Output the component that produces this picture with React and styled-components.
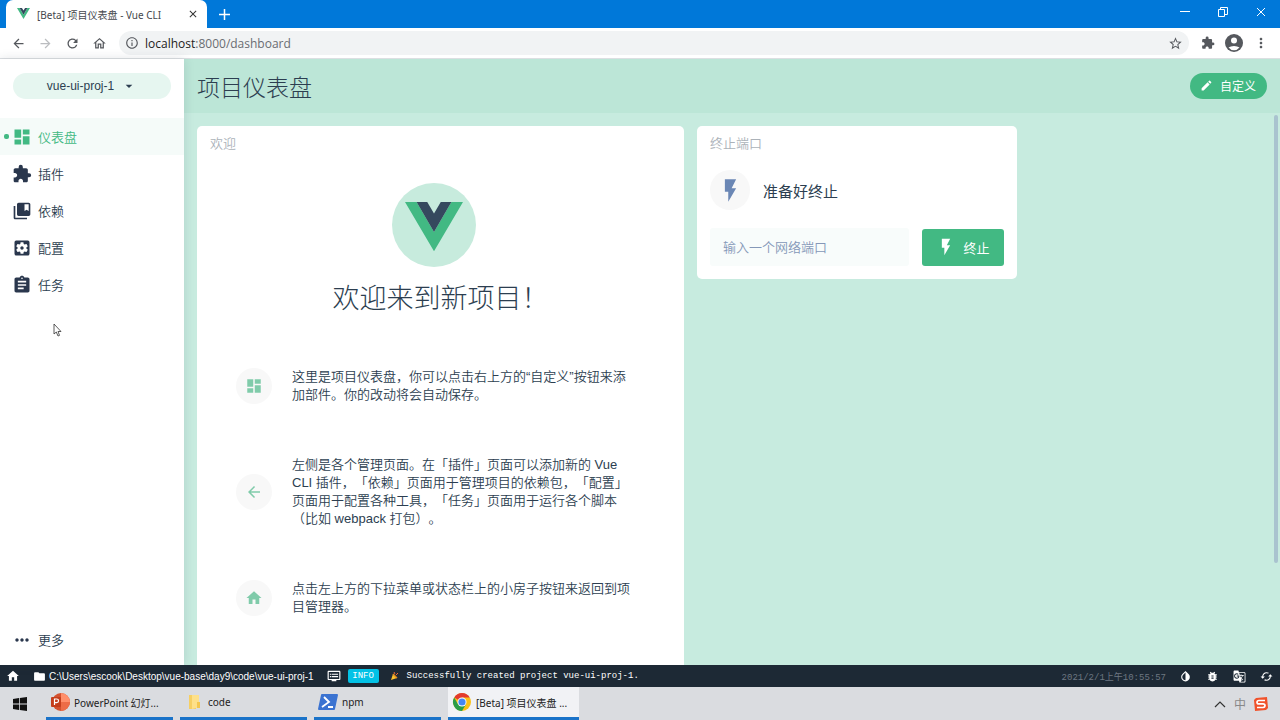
import React, { useState } from "react";
import styled, { createGlobalStyle, css } from "styled-components";
import {
  MdArrowBack,
  MdArrowDropDown,
  MdArrowForward,
  MdAssignment,
  MdBugReport,
  MdCached,
  MdClose,
  MdCollectionsBookmark,
  MdDashboard,
  MdDvr,
  MdEdit,
  MdExtension,
  MdFlashOn,
  MdFolder,
  MdGTranslate,
  MdHome,
  MdInvertColors,
  MdMoreHoriz,
  MdMoreVert,
  MdOutlineHome,
  MdOutlineInfo,
  MdRefresh,
  MdSettingsApplications,
  MdStarBorder,
} from "react-icons/md";

const navItems = [
  { label: "仪表盘", icon: MdDashboard },
  { label: "插件", icon: MdExtension },
  { label: "依赖", icon: MdCollectionsBookmark },
  { label: "配置", icon: MdSettingsApplications },
  { label: "任务", icon: MdAssignment },
];

const tips = [
  {
    icon: MdDashboard,
    text: "这里是项目仪表盘，你可以点击右上方的“自定义”按钮来添加部件。你的改动将会自动保存。",
  },
  {
    icon: MdArrowBack,
    text: "左侧是各个管理页面。在「插件」页面可以添加新的 Vue CLI 插件，「依赖」页面用于管理项目的依赖包，「配置」页面用于配置各种工具，「任务」页面用于运行各个脚本（比如 webpack 打包）。",
  },
  {
    icon: MdHome,
    text: "点击左上方的下拉菜单或状态栏上的小房子按钮来返回到项目管理器。",
  },
];

const VueMark = ({ width }) => (
  <svg width={width} viewBox="0 0 60 51" aria-hidden="true">
    <path d="M0 0h12l18 31L48 0h12L30 51z" fill="#42b983" />
    <path d="M12 0h11l7 12 7-12h11L30 31z" fill="#35495e" />
  </svg>
);

const WindowsIcon = () => (
  <svg width="14" height="14" viewBox="0 0 14 14" fill="#111" aria-hidden="true">
    <path d="M0 2l6-1v5.600H0zM6.800.9L14 0v6.600H6.800zM0 7.400h6V13l-6-1zM6.800 7.400H14V14l-7.200-1z" />
  </svg>
);

const PowerPointIcon = () => (
  <svg width="20" height="20" viewBox="0 0 20 20" aria-hidden="true">
    <circle cx="11" cy="10" r="9" fill="#d35230" />
    <path d="M11 1a9 9 0 0 1 9 9h-9z" fill="#ff8f6b" />
    <path d="M11 10h9a9 9 0 0 1-9 9z" fill="#ed6c47" />
    <rect x="1" y="5" width="10" height="10" rx="1" fill="#c43e1c" />
    <path d="M4.500 13V7h2.200a1.800 1.800 0 0 1 0 3.700H4.500" fill="none" stroke="#fff" strokeWidth="1.200" />
  </svg>
);

const ExplorerIcon = () => (
  <svg width="20" height="18" viewBox="0 0 20 18" aria-hidden="true">
    <path d="M5 2h7v14H5z" fill="#f6cf63" />
    <path d="M8 2h7v12l-7 2z" fill="#fde08a" />
    <path d="M13 9h3v6h-3z" fill="#f3c64f" />
  </svg>
);

const PowerShellIcon = () => (
  <svg width="20" height="16" viewBox="0 0 20 16" aria-hidden="true">
    <path d="M4 0h15a1 1 0 0 1 1 1l-3 14a1 1 0 0 1-1 1H1a1 1 0 0 1-1-1L3 1a1 1 0 0 1 1-1z" fill="#3b73d1" />
    <path d="M6 3l5 5-7 5M10 13h5" fill="none" stroke="#fff" strokeWidth="1.800" />
  </svg>
);

const ChromeIcon = () => (
  <svg width="20" height="20" viewBox="0 0 20 20" aria-hidden="true">
    <circle cx="10" cy="10" r="9" fill="#fbc116" />
    <path d="M10 10L2.200 5.500A9 9 0 0 1 17.800 5.500H10z" fill="#e33b2e" />
    <path d="M2.200 5.500A9 9 0 0 0 10 19l4-6.700-8 0z" fill="#2a9d48" />
    <circle cx="10" cy="10" r="4.500" fill="#fff" />
    <circle cx="10" cy="10" r="3.600" fill="#4587f3" />
  </svg>
);

const AvatarIcon = () => (
  <svg width="20" height="20" viewBox="0 0 20 20" aria-hidden="true">
    <circle cx="10" cy="10" r="9" fill="#55585d" />
    <circle cx="10" cy="7.500" r="3" fill="#fff" />
    <path d="M4.500 14.500a7 4 0 0 1 11 0 7 7 0 0 1-11 0z" fill="#fff" />
  </svg>
);

const PartyIcon = () => (
  <svg width="10" height="10" viewBox="0 0 10 10" aria-hidden="true">
    <path d="M1 9l2-6 4 4z" fill="#fbc02d" />
    <path d="M3 3l4 4" stroke="#e08a1e" strokeWidth="1.500" />
    <path d="M4 1l1 2M6 4l2-2" stroke="#f0653a" strokeWidth="1" />
  </svg>
);

const SogouIcon = () => (
  <svg width="14" height="14" viewBox="0 0 14 14" aria-hidden="true">
    <path d="M2 1l11-1 1 11-2 2-11 1-1-11z" fill="#f0522b" />
    <path d="M11 3.500H5q-2 0-2 1.700t2 1.700h4q2 0 2 1.700t-2 1.900H3" fill="none" stroke="#fff" strokeWidth="1.700" />
  </svg>
);

const tasks = [
  { label: "PowerPoint 幻灯...", icon: PowerPointIcon },
  { label: "code", icon: ExplorerIcon },
  { label: "npm", icon: PowerShellIcon },
  { label: "[Beta] 项目仪表盘 ...", icon: ChromeIcon, active: true },
];

const Browser = () => (
  <>
    <TabStrip>
      <Tab>
        <VueMark width={13} />
        <span>[Beta] 项目仪表盘 - Vue CLI</span>
        <PlainButton aria-label="关闭标签页">
          <MdClose size={12} color="#333" />
        </PlainButton>
      </Tab>
      <NewTab aria-label="新标签页">
        <svg width="11" height="11" viewBox="0 0 11 11" stroke="#fff" strokeWidth="1.500">
          <path d="M5.500 0v11M0 5.500h11" />
        </svg>
      </NewTab>
      <WindowControls>
        <PlainButton aria-label="最小化">
          <svg width="10" height="10" viewBox="0 0 10 10" stroke="#fff">
            <path d="M0 4.500h10" />
          </svg>
        </PlainButton>
        <PlainButton aria-label="还原">
          <svg width="10" height="10" viewBox="0 0 10 10" fill="none" stroke="#fff">
            <path d="M.5 2.500h6v7h-6zM2.500 2.500v-2h7v7h-3" />
          </svg>
        </PlainButton>
        <PlainButton aria-label="关闭">
          <svg width="10" height="10" viewBox="0 0 10 10" stroke="#fff">
            <path d="M1 1l8 8M9 1L1 9" />
          </svg>
        </PlainButton>
      </WindowControls>
    </TabStrip>
    <AddressBar>
      <PlainButton aria-label="后退">
        <MdArrowBack size={15} />
      </PlainButton>
      <PlainButton aria-label="前进" disabled>
        <MdArrowForward size={15} />
      </PlainButton>
      <PlainButton aria-label="刷新">
        <MdRefresh size={15} />
      </PlainButton>
      <PlainButton aria-label="主页">
        <MdOutlineHome size={15} />
      </PlainButton>
      <Omnibox>
        <MdOutlineInfo size={14} />
        <Url>
          localhost<span>:8000/dashboard</span>
        </Url>
        <PlainButton aria-label="收藏">
          <MdStarBorder size={15} />
        </PlainButton>
      </Omnibox>
      <BrowserActions>
        <PlainButton aria-label="扩展程序">
          <MdExtension size={14} />
        </PlainButton>
        <PlainButton aria-label="用户">
          <AvatarIcon />
        </PlainButton>
        <PlainButton aria-label="菜单">
          <MdMoreVert size={16} />
        </PlainButton>
      </BrowserActions>
    </AddressBar>
  </>
);

const App = () => {
  const [current, setCurrent] = useState("仪表盘");
  const [port, setPort] = useState("");

  return (
    <Screen>
      <GlobalStyle />
      <Browser />

      <Main>
        <Sidebar>
          <ProjectButton>
            vue-ui-proj-1
            <MdArrowDropDown size={16} />
          </ProjectButton>
          <Nav>
            {navItems.map(({ label, icon: Icon }) => (
              <NavItem key={label} href="#" $active={label === current} onClick={() => setCurrent(label)}>
                <Icon size={20} />
                {label}
              </NavItem>
            ))}
          </Nav>
          <NavItem href="#">
            <MdMoreHoriz size={20} />
            更多
          </NavItem>
        </Sidebar>

        <Dashboard>
          <Header>
            <h1>项目仪表盘</h1>
            <CustomizeButton>
              <MdEdit size={13} />
              自定义
            </CustomizeButton>
          </Header>
          <Content>
            <Widgets>
              <Widget $tall>
                <WidgetTitle>欢迎</WidgetTitle>
                <Hero>
                  <LogoCircle>
                    <VueMark width={58} />
                  </LogoCircle>
                </Hero>
                <Welcome>欢迎来到新项目！</Welcome>
                <Tips>
                  {tips.map(({ icon: Icon, text }) => (
                    <Tip key={text}>
                      <Bubble $size={36} $color="#80cbaa">
                        <Icon size={18} />
                      </Bubble>
                      <p>{text}</p>
                    </Tip>
                  ))}
                </Tips>
              </Widget>

              <Widget>
                <WidgetTitle>终止端口</WidgetTitle>
                <Status>
                  <Bubble $size={40} $color="#6b87b5">
                    <MdFlashOn size={27} />
                  </Bubble>
                  准备好终止
                </Status>
                <PortForm onSubmit={(e) => e.preventDefault()}>
                  <input
                    aria-label="网络端口"
                    placeholder="输入一个网络端口"
                    value={port}
                    onChange={(e) => setPort(e.target.value)}
                  />
                  <KillButton type="submit">
                    <MdFlashOn size={20} />
                    终止
                  </KillButton>
                </PortForm>
              </Widget>
            </Widgets>
            <ScrollThumb />
          </Content>
        </Dashboard>
        <Pointer width="9" height="14" viewBox="0 0 9 14">
          <path d="M1 1v10l2.300-2 1.700 4 1.500-.6L5 8.500h3z" fill="#fff" stroke="#333" strokeWidth=".8" />
        </Pointer>
      </Main>

      <StatusBar>
        <MdHome size={14} />
        <ProjectPath>
          <MdFolder size={13} />
          C:\Users\escook\Desktop\vue-base\day9\code\vue-ui-proj-1
        </ProjectPath>
        <Log>
          <MdDvr size={14} />
          <Badge>INFO</Badge>
          <PartyIcon />
          <span>Successfully created project vue-ui-proj-1.</span>
        </Log>
        <Time>2021/2/1上午10:55:57</Time>
        <StatusIcons>
          <MdInvertColors size={13} />
          <MdBugReport size={13} />
          <MdGTranslate size={13} />
          <MdCached size={13} />
        </StatusIcons>
      </StatusBar>

      <Taskbar>
        <StartButton aria-label="开始">
          <WindowsIcon />
        </StartButton>
        {tasks.map(({ label, icon: Icon, active }) => (
          <Task key={label} $active={active}>
            <Icon />
            {label}
          </Task>
        ))}
        <Tray>
          <svg width="12" height="8" viewBox="0 0 12 8" fill="none" stroke="#333" strokeWidth="1.200">
            <path d="M1 7l5-5 5 5" />
          </svg>
          <span>中</span>
          <SogouIcon />
        </Tray>
      </Taskbar>
    </Screen>
  );
};

const GlobalStyle = createGlobalStyle`
  * {
    box-sizing: border-box;
  }

  body {
    margin: 0;
    font-family: "Liberation Sans", "Noto Sans CJK SC", sans-serif;
    font-size: 13px;
    color: #2c3e50;
  }

  button, input {
    font: inherit;
  }

  svg {
    flex: none;
  }
`;

const systemFont = css`
  font-family: "Noto Sans", "Noto Sans CJK SC", sans-serif;
`;

const Screen = styled.div`
  display: flex;
  flex-direction: column;
  height: 100vh;
  overflow: hidden;
`;

const PlainButton = styled.button`
  display: flex;
  align-items: center;
  justify-content: center;
  padding: 0;
  border: 0;
  background: none;
  color: #55585d;
  cursor: pointer;

  &:disabled {
    color: #bbbdc0;
  }
`;

const TabStrip = styled.div`
  ${systemFont}
  display: flex;
  flex: none;
  align-items: center;
  height: 28px;
  padding-left: 6px;
  background: #0078d9;
`;

const Tab = styled.div`
  display: flex;
  align-items: center;
  gap: 7px;
  width: 201px;
  height: 28px;
  padding: 0 8px 0 11px;
  border-radius: 7px 7px 0 0;
  background: #fff;
  color: #45484d;
  font-size: 10px;

  span {
    flex: 1;
    white-space: nowrap;
  }
`;

const NewTab = styled(PlainButton)`
  width: 35px;
  height: 28px;
`;

const WindowControls = styled.div`
  display: flex;
  gap: 28px;
  margin-left: auto;
  padding: 0 14px 4px 0;
`;

const AddressBar = styled.div`
  display: flex;
  flex: none;
  align-items: center;
  gap: 12px;
  height: 31px;
  padding: 0 11px;
  border-bottom: 1px solid #dcdfe2;
  background: #fff;
  font-family: "Open Sans", "Noto Sans CJK SC", sans-serif;
`;

const BrowserActions = styled.div`
  display: flex;
  align-items: center;
  gap: 9px;
`;

const Omnibox = styled.div`
  display: flex;
  flex: 1;
  align-items: center;
  height: 24px;
  padding: 0 6px;
  border-radius: 12px;
  background: #f1f3f4;
  color: #55585d;
`;

const Url = styled.div`
  flex: 1;
  padding-left: 6px;
  color: #222;
  font-size: 12px;

  span {
    color: #6a6d72;
  }
`;

const Main = styled.main`
  position: relative;
  display: flex;
  flex: 1;
  min-height: 0;
`;

const Sidebar = styled.aside`
  z-index: 1;
  display: flex;
  flex: none;
  flex-direction: column;
  width: 184px;
  padding: 14px 0 7px;
  background: #fff;
  box-shadow: 0 0 10px rgba(44, 62, 80, 0.15);
`;

const ProjectButton = styled.button`
  display: flex;
  align-items: center;
  justify-content: center;
  gap: 7px;
  height: 26px;
  margin: 0 13px;
  border: 0;
  border-radius: 13px;
  background: #e6f6f0;
  color: #2c3e50;
  font-size: 12px;
  cursor: pointer;
`;

const Nav = styled.nav`
  flex: 1;
  margin-top: 19px;
`;

const NavItem = styled.a`
  display: flex;
  align-items: center;
  gap: 6px;
  height: 37px;
  padding-left: 12px;
  color: #2c3e50;
  font-weight: 350;
  text-decoration: none;

  ${({ $active }) =>
    $active &&
    css`
      padding-left: 4px;
      background: #f5fbf9;
      color: #42b983;

      &::before {
        width: 5px;
        height: 5px;
        margin-right: -3px;
        border-radius: 2px;
        background: #42b983;
        content: "";
      }
    `}

  svg {
    color: ${({ $active }) => ($active ? "#42b983" : "#2a374d")};
  }
`;

const Dashboard = styled.section`
  display: flex;
  flex: 1;
  flex-direction: column;
  min-width: 0;
  background: #c7ebdf;
`;

const Header = styled.header`
  display: flex;
  flex: none;
  align-items: center;
  justify-content: space-between;
  height: 54px;
  padding: 0 13px 1px;
  background: #bce6d7;

  h1 {
    margin: 0;
    font-size: 23px;
    font-weight: 300;
  }
`;

const CustomizeButton = styled.button`
  display: flex;
  align-items: center;
  gap: 7px;
  height: 26px;
  padding: 0 11px 0 10px;
  border: 0;
  border-radius: 13px;
  background: #42b983;
  color: #fff;
  font-size: 12px;
  cursor: pointer;
`;

const Content = styled.div`
  display: flex;
  flex: 1;
  min-height: 0;
  overflow: hidden;
`;

const Widgets = styled.div`
  display: grid;
  flex: 1;
  grid-template-columns: minmax(0, 487px) minmax(0, 320px);
  align-items: start;
  gap: 13px;
  padding: 13px 13px 0;
`;

const Widget = styled.article`
  min-height: ${({ $tall }) => ($tall ? "640px" : "153px")};
  padding: 9px 13px 13px;
  border-radius: 5px;
  background: #fff;
`;

const WidgetTitle = styled.h2`
  margin: 0;
  color: #abb2b9;
  font-size: 13px;
  font-weight: 350;
  line-height: 18px;
`;

const Hero = styled.div`
  display: flex;
  justify-content: center;
  padding: 30px 14px 14px 0;
`;

const LogoCircle = styled.div`
  display: flex;
  align-items: center;
  justify-content: center;
  width: 84px;
  height: 84px;
  padding-top: 4px;
  border-radius: 50%;
  background: #c7ebdd;
`;

const Welcome = styled.p`
  margin: 0;
  font-size: 27px;
  font-weight: 300;
  line-height: 36px;
  text-align: center;
`;

const Tips = styled.div`
  display: flex;
  flex-direction: column;
  gap: 52px;
  padding: 51px 26px 0;
`;

const Tip = styled.div`
  display: flex;
  align-items: center;
  gap: 20px;

  p {
    flex: 1;
    max-width: 344px;
    margin: 0;
    font-weight: 350;
    line-height: 18px;
    text-spacing-trim: space-all;
  }
`;

const Bubble = styled.span`
  display: flex;
  flex: none;
  align-items: center;
  justify-content: center;
  width: ${({ $size }) => $size}px;
  height: ${({ $size }) => $size}px;
  border-radius: 50%;
  background: #f8f8f8;
  color: ${({ $color }) => $color};
`;

const Status = styled.div`
  display: flex;
  align-items: center;
  gap: 13px;
  margin-top: 17px;
  font-size: 15px;
`;

const PortForm = styled.form`
  display: flex;
  align-items: center;
  gap: 13px;
  margin-top: 18px;

  input {
    flex: 1;
    min-width: 0;
    height: 38px;
    padding: 0 13px;
    border: 0;
    border-radius: 3px;
    background: #f8fcfb;
    color: #2c3e50;
    font-weight: 350;
  }

  input::placeholder {
    color: #8598b8;
  }
`;

const KillButton = styled.button`
  display: flex;
  align-items: center;
  justify-content: center;
  gap: 7px;
  width: 82px;
  height: 37px;
  padding: 0;
  border: 0;
  border-radius: 3px;
  background: #42b983;
  color: #fff;
  cursor: pointer;
`;

const ScrollThumb = styled.div`
  width: 4px;
  height: 448px;
  margin: 2px 2px 0 0;
  border-radius: 2px;
  background: #a9c3cf;
`;

const Pointer = styled.svg`
  position: absolute;
  top: 264px;
  left: 53px;
  z-index: 2;
`;

const StatusBar = styled.footer`
  display: flex;
  flex: none;
  align-items: center;
  height: 22px;
  padding: 0 7px 0 6px;
  background: #1d2935;
  color: #fff;
  white-space: nowrap;
`;

const ProjectPath = styled.div`
  display: flex;
  align-items: center;
  gap: 3px;
  margin: 0 13px;
  font-size: 10px;
`;

const Log = styled.div`
  display: flex;
  flex: 1;
  align-items: center;
  gap: 7px;
  font-family: "Liberation Mono", "Noto Sans CJK SC", monospace;
  font-size: 9px;
`;

const Badge = styled.span`
  width: 31px;
  margin-right: 4px;
  border-radius: 2px;
  background: #03c2e6;
  line-height: 14px;
  text-align: center;
`;

const Time = styled.time`
  color: #6d7781;
  font-family: "Liberation Mono", "Noto Sans CJK SC", monospace;
  font-size: 9px;
`;

const StatusIcons = styled.div`
  display: flex;
  gap: 14px;
  margin-left: 13px;
`;

const Taskbar = styled.div`
  ${systemFont}
  display: flex;
  flex: none;
  align-items: center;
  gap: 7px;
  height: 33px;
  background: #dadce0;
`;

const StartButton = styled(PlainButton)`
  width: 39px;
  height: 33px;
`;

const Task = styled.button`
  display: flex;
  align-items: center;
  gap: 4px;
  width: ${({ $active }) => ($active ? 131 : 127)}px;
  height: 33px;
  padding: 0 4px;
  border: 0;
  border-bottom: 3px solid #1a73c9;
  background: ${({ $active }) => ($active ? "#f1f2f5" : "transparent")};
  color: #222;
  font-size: 10px;
  white-space: nowrap;
`;

const Tray = styled.div`
  display: flex;
  align-items: center;
  gap: 8px;
  margin-left: auto;
  padding-right: 12px;
  color: #888;
  font-size: 12px;
`;

export default App;
